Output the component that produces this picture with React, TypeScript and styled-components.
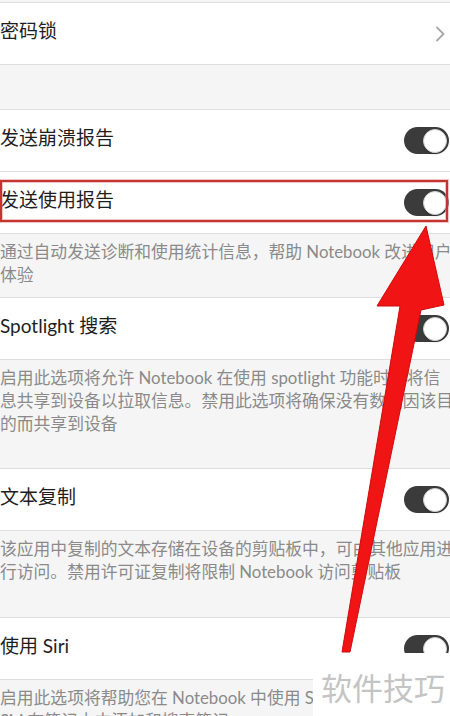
import React from "react";
import styled, { createGlobalStyle } from "styled-components";

const Global = createGlobalStyle`
  html, body { margin: 0; padding: 0; background: #f5f5f5; }
  body { font-family: Lato, "Noto Sans CJK SC", sans-serif; overflow: hidden; }
`;

const Page = styled.div`
  position: relative;
  width: 450px;
  height: 716px;
  overflow: hidden;
  background: #f5f5f5;
  padding-top: 2px;
  box-sizing: border-box;
`;

const List = styled.div`
  border-top: 1px solid #dedede;
`;

const Row = styled.div`
  position: relative;
  height: 61px;
  display: flex;
  align-items: center;
  justify-content: space-between;
  background: #ffffff;
  border-bottom: 1px solid #dedede;
`;

const Title = styled.span`
  font-size: 19px;
  line-height: 26px;
  padding-bottom: 5px;
  color: #1e1e1e;
  white-space: nowrap;
`;

const Gap = styled.div`
  height: 44px;
  background: #f5f5f5;
  border-bottom: 1px solid #dedede;
`;

const Desc = styled.div<{ $pb: number }>`
  background: #f5f5f5;
  padding: 6px 0 ${(p) => p.$pb}px 0;
  border-bottom: 1px solid #dedede;
`;

const DescLine = styled.div`
  font-size: 16.8px;
  line-height: 23px;
  color: #8a8a8a;
  white-space: nowrap;
  overflow: hidden;
`;

const Track = styled.div`
  position: relative;
  width: 45px;
  height: 27px;
  border-radius: 14px;
  background: #3b3b3b;
  margin-right: 1px;
  flex: none;
`;

const Knob = styled.div`
  position: absolute;
  right: 2px;
  top: 1.5px;
  width: 24px;
  height: 24px;
  border-radius: 50%;
  background: #ffffff;
  box-sizing: border-box;
  border: 1px solid #cfcfcf;
  box-shadow: 0 1px 2px rgba(0, 0, 0, 0.25);
`;

const Chevron = styled.svg`
  width: 12px;
  height: 16px;
  margin-right: 4px;
  flex: none;
`;

const Highlight = styled.div`
  position: absolute;
  left: 0;
  right: 2px;
  top: 8px;
  bottom: 11px;
  border: 2px solid #c4342e;
  box-shadow: 0 0 0 1px rgba(232, 150, 150, 0.55),
    inset 0 0 0 1px rgba(232, 150, 150, 0.55);
  pointer-events: none;
`;

const ArrowLayer = styled.svg`
  position: absolute;
  left: 0;
  top: 0;
  width: 450px;
  height: 716px;
  pointer-events: none;
`;

const Watermark = styled.div`
  position: absolute;
  left: 313px;
  top: 653px;
  width: 137px;
  height: 63px;
  background: #ffffff;
  display: flex;
  align-items: flex-start;
  justify-content: flex-end;
  padding-right: 5px;
  box-sizing: border-box;
`;

const WatermarkText = styled.span`
  font-family: "Noto Sans CJK SC", sans-serif;
  font-size: 31px;
  line-height: 40px;
  margin-top: 14px;
  color: #c4c4c4;
  white-space: nowrap;
`;

const Toggle = () => (
  <Track>
    <Knob />
  </Track>
);

export default function App() {
  return (
    <>
      <Global />
      <Page>
        <List>
          <Row>
            <Title>密码锁</Title>
            <Chevron viewBox="0 0 12 16">
              <polyline
                points="3,1.5 9.5,8 3,14.5"
                fill="none"
                stroke="#a8a8a8"
                strokeWidth="1.8"
                strokeLinecap="round"
                strokeLinejoin="round"
              />
            </Chevron>
          </Row>
          <Gap />
          <Row>
            <Title>发送崩溃报告</Title>
            <Toggle />
          </Row>
          <Row>
            <Title>发送使用报告</Title>
            <Toggle />
            <Highlight />
          </Row>
          <Desc $pb={11}>
            <DescLine>通过自动发送诊断和使用统计信息，帮助 Notebook 改进用户</DescLine>
            <DescLine>体验</DescLine>
          </Desc>
          <Row>
            <Title>Spotlight 搜索</Title>
            <Toggle />
          </Row>
          <Desc $pb={33}>
            <DescLine>启用此选项将允许 Notebook 在使用 spotlight 功能时，将信</DescLine>
            <DescLine>息共享到设备以拉取信息。禁用此选项将确保没有数据因该目</DescLine>
            <DescLine>的而共享到设备</DescLine>
          </Desc>
          <Row>
            <Title>文本复制</Title>
            <Toggle />
          </Row>
          <Desc $pb={34}>
            <DescLine>该应用中复制的文本存储在设备的剪贴板中，可由其他应用进</DescLine>
            <DescLine>行访问。禁用许可证复制将限制 Notebook 访问剪贴板</DescLine>
          </Desc>
          <Row>
            <Title>使用 Siri</Title>
            <Toggle />
          </Row>
          <Desc $pb={20}>
            <DescLine>启用此选项将帮助您在 Notebook 中使用 Siri</DescLine>
            <DescLine>Siri 在笔记本中添加和搜索笔记</DescLine>
          </Desc>
        </List>
        <ArrowLayer viewBox="0 0 450 716">
          <polygon
            points="426,226 444,305 421,310 350,652 342,652 400,306 377,306"
            fill="#f01414"
            stroke="#d10a0a"
            strokeWidth="1"
            strokeLinejoin="round"
          />
        </ArrowLayer>
        <Watermark>
          <WatermarkText>软件技巧</WatermarkText>
        </Watermark>
      </Page>
    </>
  );
}
